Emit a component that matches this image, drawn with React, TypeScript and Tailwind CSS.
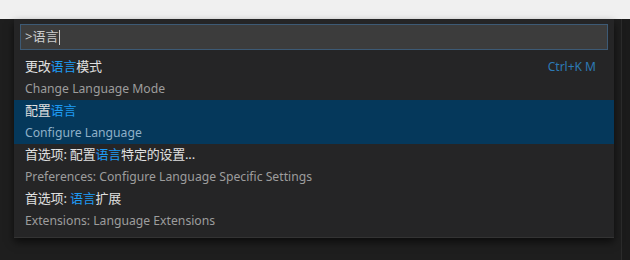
const items = [
    { pre: '更改', hl: '语言', post: '模式', detail: 'Change Language Mode', key: 'Ctrl+K M' },
    { pre: '配置', hl: '语言', post: '', detail: 'Configure Language', selected: true },
    { pre: '首选项: 配置', hl: '语言', post: '特定的设置...', detail: 'Preferences: Configure Language Specific Settings' },
    { pre: '首选项: ', hl: '语言', post: '扩展', detail: 'Extensions: Language Extensions' },
];

export default function App() {
    return (
        <div className="w-[630px] h-[260px] flex flex-col overflow-hidden font-['Segoe_UI','Noto_Sans','Noto_Sans_CJK_SC',sans-serif] text-[13px]">
            <div className="h-[19px] bg-[#f0f0f0]" />
            <div className="relative flex-1 flex bg-[#1e1e1e]">
                <div className="flex-1" />
                <div className="w-[9px] bg-[#1b1b1b] border-l border-[#2b2b2b]" />

                {/* Quick open widget */}
                <div className="absolute left-[14px] top-0 w-[600px] bg-[#252526] pt-[5px] pb-[5px] shadow-[0_4px_8px_rgba(0,0,0,0.6)] border-b border-[#333]">
                    <div className="mx-[6px] h-[26px] bg-[#3c3c3c] border border-[#3d5a75] flex items-center px-[4px] text-[#cccccc]">
                        <span>&gt;语言</span>
                        <span className="w-px h-[15px] bg-[#cccccc] ml-px" />
                    </div>
                    <div className="mt-[6px]">
                        {items.map((it, i) => (
                            <div
                                key={i}
                                className={`h-[44px] pl-[11px] pr-[18px] flex flex-col ${it.selected ? 'bg-[#05385b]' : ''}`}
                            >
                                <div className="h-[22px] flex items-center justify-between">
                                    <span className="text-[#e0e0e0] tracking-[-0.2px]">
                                        {it.pre}
                                        <span className="text-[#1e9bf5]">{it.hl}</span>
                                        {it.post}
                                    </span>
                                    {it.key && <span className="text-[#2d7ab5] text-[12px]">{it.key}</span>}
                                </div>
                                <div className={`h-[22px] flex items-center text-[12.2px] ${it.selected ? 'text-[#8fb0c8]' : 'text-[#9d9d9d]'}`}>
                                    {it.detail}
                                </div>
                            </div>
                        ))}
                    </div>
                </div>
            </div>
        </div>
    );
}
